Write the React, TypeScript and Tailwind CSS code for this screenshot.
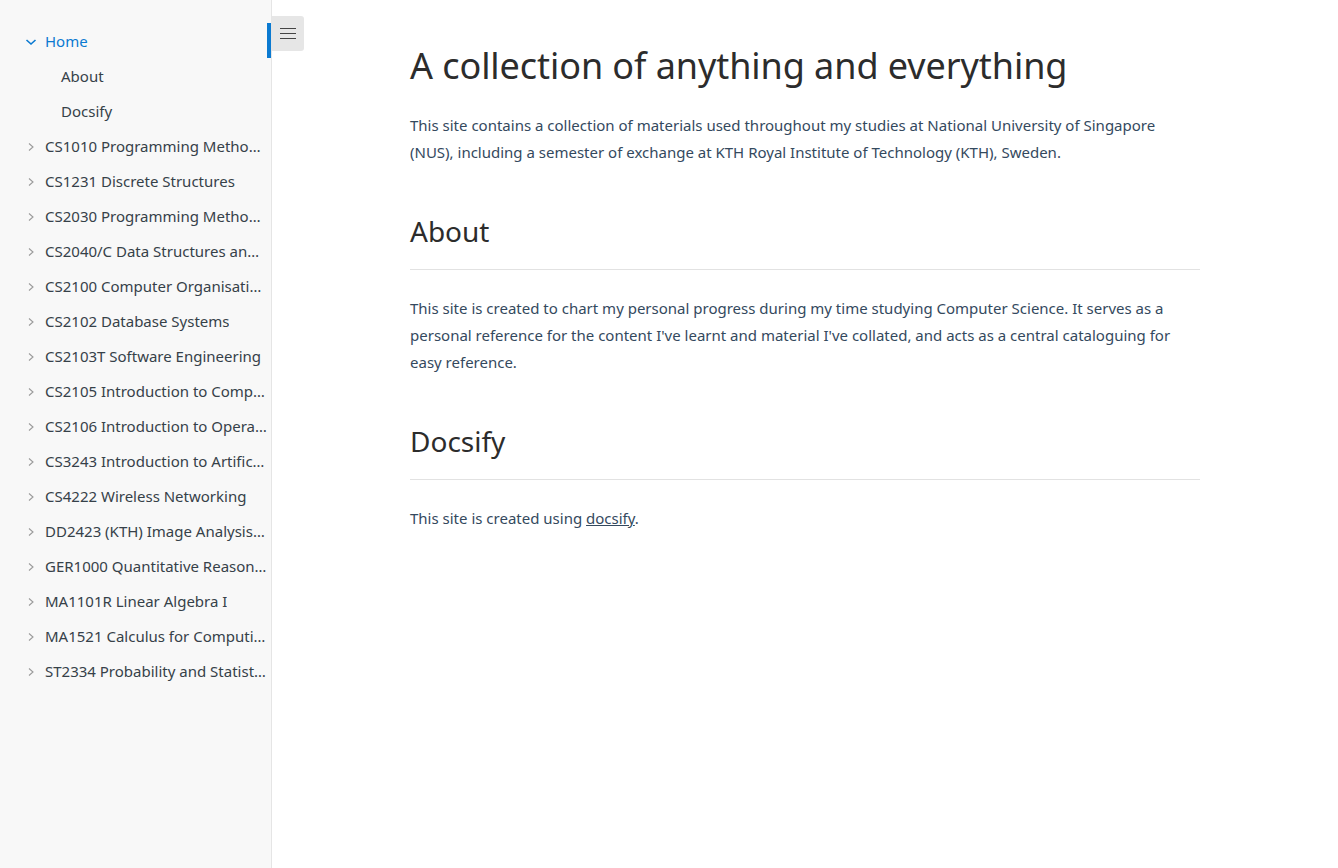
import React from 'react';

const courses = [
  'CS1010 Programming Methodology',
  'CS1231 Discrete Structures',
  'CS2030 Programming Methodology II',
  'CS2040/C Data Structures and Algorithms',
  'CS2100 Computer Organisation',
  'CS2102 Database Systems',
  'CS2103T Software Engineering',
  'CS2105 Introduction to Computer Networks',
  'CS2106 Introduction to Operating Systems',
  'CS3243 Introduction to Artificial Intelligence',
  'CS4222 Wireless Networking',
  'DD2423 (KTH) Image Analysis and Computer Vision',
  'GER1000 Quantitative Reasoning',
  'MA1101R Linear Algebra I',
  'MA1521 Calculus for Computing',
  'ST2334 Probability and Statistics',
];

const ChevronRight = () => (
  <svg width="10" height="10" viewBox="0 0 10 10" className="shrink-0">
    <polyline points="3,1.5 7,5 3,8.5" fill="none" stroke="#9a9a9a" strokeWidth="1.1" />
  </svg>
);

const ChevronDown = () => (
  <svg width="12" height="10" viewBox="0 0 12 10" className="shrink-0">
    <polyline points="1.5,3 6,7 10.5,3" fill="none" stroke="#0b7ad1" strokeWidth="1.6" />
  </svg>
);

const Sidebar: React.FC = () => (
  <aside className="w-[272px] shrink-0 min-h-[868px] bg-[#f8f8f8] border-r border-[#e5e5e5] pt-[24px] text-[15px] text-[#364149]">
    <ul>
      {/* Active item */}
      <li className="relative flex items-center h-[35px] pl-[25px] pr-[6px]">
        <ChevronDown />
        <span className="ml-[8px] text-[#0b7ad1]">Home</span>
        <span className="absolute right-0 top-[-1px] h-[35px] w-[4px] bg-[#0b7ad1]" />
      </li>
      <li className="flex items-center h-[35px] pl-[61px]">About</li>
      <li className="flex items-center h-[35px] pl-[61px]">Docsify</li>
      {courses.map((c) => (
        <li key={c} className="flex items-center h-[35px] pl-[26px] pr-[4px]">
          <ChevronRight />
          <span className="ml-[9px] truncate">{c}</span>
        </li>
      ))}
    </ul>
  </aside>
);

const App: React.FC = () => {
  return (
    <div className="flex min-h-[868px] bg-white" style={{ fontFamily: '"Noto Sans", "Open Sans", sans-serif' }}>
      <Sidebar />
      <main className="relative flex-1">
        <button className="absolute left-0 top-[16px] w-[32px] h-[35px] bg-[#e6e6e6] rounded-r-[3px] flex flex-col items-center justify-center gap-[4px]">
          <span className="block w-[16px] h-px bg-[#444]" />
          <span className="block w-[16px] h-px bg-[#444]" />
          <span className="block w-[16px] h-px bg-[#444]" />
        </button>
        <article className="mx-auto w-[790px] pt-[44px] pb-10 text-[15px] leading-[27px] text-[#34495e]">
          <h1 className="text-[36px] leading-[43px] text-[#2c2c2c] tracking-[-0.07px]">
            A collection of anything and everything
          </h1>
          <p className="mt-[25px]">
            This site contains a collection of materials used throughout my studies at National University of Singapore
            (NUS), including a semester of exchange at KTH Royal Institute of Technology (KTH), Sweden.
          </p>
          <h2 className="mt-[48px] text-[28px] leading-[34px] text-[#2c2c2c] pb-[21px] border-b border-[#e2e2e2]">
            About
          </h2>
          <p className="mt-[25px]">
            This site is created to chart my personal progress during my time studying Computer Science. It serves as a
            personal reference for the content I've learnt and material I've collated, and acts as a central cataloguing
            for easy reference.
          </p>
          <h2 className="mt-[48px] text-[28px] leading-[34px] text-[#2c2c2c] pb-[21px] border-b border-[#e2e2e2]">
            Docsify
          </h2>
          <p className="mt-[25px]">
            This site is created using{' '}
            <a href="#" className="underline text-[#34495e]">
              docsify
            </a>
            .
          </p>
        </article>
      </main>
    </div>
  );
};

export default App;
